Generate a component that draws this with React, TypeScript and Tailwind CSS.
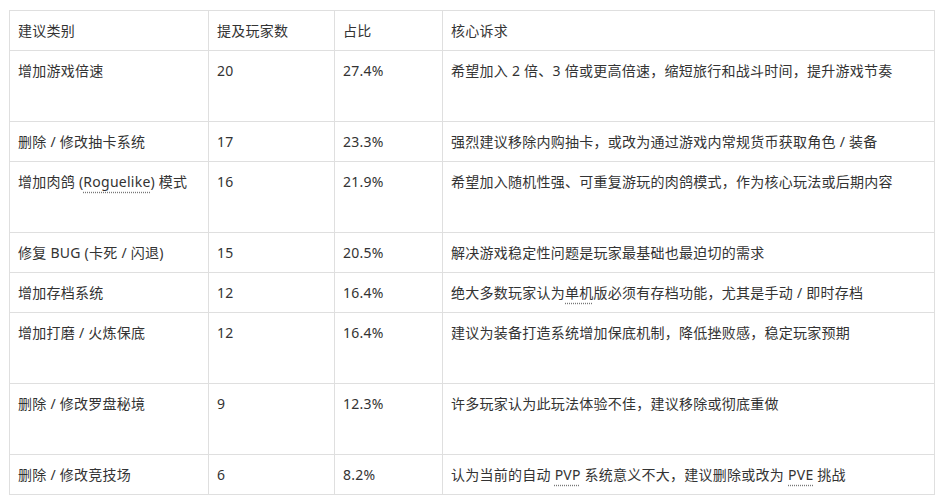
const rows: { cat: React.ReactNode; count: string; pct: string; desc: React.ReactNode; tall?: boolean }[] = [
  { cat: "增加游戏倍速", count: "20", pct: "27.4%", desc: "希望加入 2 倍、3 倍或更高倍速，缩短旅行和战斗时间，提升游戏节奏", tall: true },
  { cat: "删除 / 修改抽卡系统", count: "17", pct: "23.3%", desc: "强烈建议移除内购抽卡，或改为通过游戏内常规货币获取角色 / 装备" },
  {
    cat: (
      <>
        增加肉鸽 (<Dotted>Roguelike</Dotted>) 模式
      </>
    ),
    count: "16",
    pct: "21.9%",
    desc: "希望加入随机性强、可重复游玩的肉鸽模式，作为核心玩法或后期内容",
    tall: true,
  },
  { cat: "修复 BUG (卡死 / 闪退)", count: "15", pct: "20.5%", desc: "解决游戏稳定性问题是玩家最基础也最迫切的需求" },
  {
    cat: "增加存档系统",
    count: "12",
    pct: "16.4%",
    desc: (
      <>
        绝大多数玩家认为<Dotted>单机</Dotted>版必须有存档功能，尤其是手动 / 即时存档
      </>
    ),
  },
  { cat: "增加打磨 / 火炼保底", count: "12", pct: "16.4%", desc: "建议为装备打造系统增加保底机制，降低挫败感，稳定玩家预期", tall: true },
  { cat: "删除 / 修改罗盘秘境", count: "9", pct: "12.3%", desc: "许多玩家认为此玩法体验不佳，建议移除或彻底重做", tall: true },
  {
    cat: "删除 / 修改竞技场",
    count: "6",
    pct: "8.2%",
    desc: (
      <>
        认为当前的自动 <Dotted>PVP</Dotted> 系统意义不大，建议删除或改为 <Dotted>PVE</Dotted> 挑战
      </>
    ),
  },
]

function Dotted({ children }: { children: React.ReactNode }) {
  return <span className="underline decoration-dotted decoration-[#777] underline-offset-[5px]">{children}</span>
}

const cell = "border border-[#dfdfdf] px-[8px] pt-[10px] pb-[9px] align-top leading-[20px]"

export default function App() {
  return (
    <div className="h-[500px] w-[941px] bg-white pl-[9px] pt-[10px] font-['Noto_Sans','Noto_Sans_CJK_SC',sans-serif] text-[14px] tracking-[0.25px] text-[#333]">
      <table className="w-[926px] table-fixed border-collapse">
        <colgroup>
          <col className="w-[199px]" />
          <col className="w-[126px]" />
          <col className="w-[108px]" />
          <col />
        </colgroup>
        <thead>
          <tr className="h-[40px]">
            <th className={`${cell} text-left font-normal`}>建议类别</th>
            <th className={`${cell} text-left font-normal`}>提及玩家数</th>
            <th className={`${cell} text-left font-normal`}>占比</th>
            <th className={`${cell} text-left font-normal`}>核心诉求</th>
          </tr>
        </thead>
        <tbody>
          {rows.map((r, i) => (
            <tr key={i} className={r.tall ? "h-[71px]" : "h-[40px]"}>
              <td className={cell}>{r.cat}</td>
              <td className={cell}>{r.count}</td>
              <td className={cell}>{r.pct}</td>
              <td className={cell}>{r.desc}</td>
            </tr>
          ))}
        </tbody>
      </table>
    </div>
  )
}
